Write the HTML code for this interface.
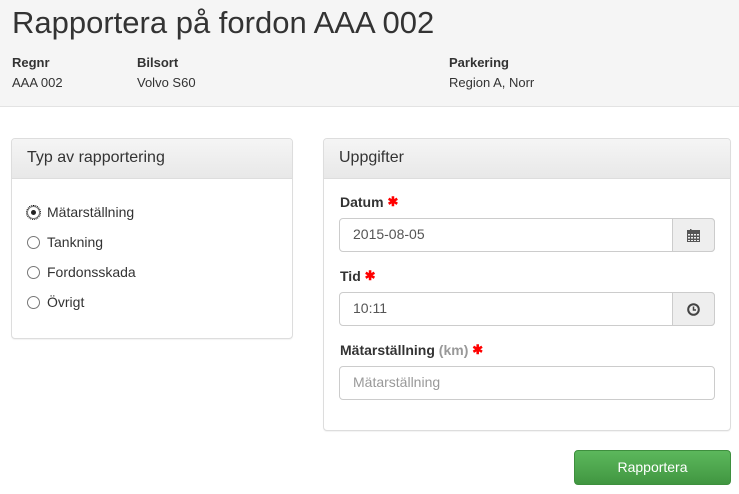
<!DOCTYPE html>
<html><head><meta charset="utf-8"><style>
*{box-sizing:border-box}
body{margin:0;width:739px;height:494px;font-family:"Liberation Sans",Arial,sans-serif;font-size:14px;color:#333;background:#fff;position:relative;overflow:hidden}
.hdr{position:absolute;left:0;top:0;width:739px;height:107px;background:#f5f5f5;border-bottom:1px solid #e3e3e3}
h1{position:absolute;left:12px;top:5px;margin:0;font-size:31px;font-weight:normal;color:#333}
.lbl{position:absolute;font-weight:bold;font-size:13px;top:55px}
.val{position:absolute;font-size:13px;top:75px}
.panel{position:absolute;border:1px solid #ddd;border-radius:4px;box-shadow:0 1px 1px rgba(0,0,0,.05);background:#fff}
.ph{height:40px;border-bottom:1px solid #ddd;background:linear-gradient(#f5f5f5,#e8e8e8);font-size:16px;padding:10px 15px;border-radius:3px 3px 0 0}
.radio{position:absolute;left:15px;font-size:14px}
.radio i{display:inline-block;width:13px;height:13px;border:1px solid #777;border-radius:50%;vertical-align:-2px;margin-right:7px;position:relative;background:#fff}
.radio i.on:after{content:"";position:absolute;left:3px;top:3px;width:5px;height:5px;border-radius:50%;background:#222}
.fl{position:absolute;left:16px;font-weight:bold;font-size:14px}
.fl .s{color:#f00;font-size:13px;vertical-align:1px}
.inp{position:absolute;left:15px;width:376px;height:34px;border:1px solid #ccc;border-radius:4px;padding:7px 13px;font-size:14px;color:#555;background:#fff}
.add{position:absolute;right:-1px;top:-1px;width:43px;height:34px;border:1px solid #ccc;border-radius:0 4px 4px 0;background:#eee;display:flex;align-items:center;justify-content:center}
.btn{position:absolute;left:574px;top:450px;width:157px;height:35px;border:1px solid #3e8f3e;border-radius:4px;background:linear-gradient(#5cb85c,#419641);color:#fff;font-size:14px;text-align:center;line-height:33px}
</style></head><body>
<div class="hdr">
<h1>Rapportera på fordon AAA 002</h1>
<div class="lbl" style="left:12px">Regnr</div><div class="val" style="left:12px">AAA 002</div>
<div class="lbl" style="left:137px">Bilsort</div><div class="val" style="left:137px">Volvo S60</div>
<div class="lbl" style="left:449px">Parkering</div><div class="val" style="left:449px">Region A, Norr</div>
</div>
<div class="panel" style="left:11px;top:138px;width:282px;height:201px">
<div class="ph">Typ av rapportering</div>
<div class="radio" style="top:65px"><i class="on" style="outline:1px dotted #000"></i>Mätarställning</div>
<div class="radio" style="top:95px"><i></i>Tankning</div>
<div class="radio" style="top:125px"><i></i>Fordonsskada</div>
<div class="radio" style="top:155px"><i></i>Övrigt</div>
</div>
<div class="panel" style="left:323px;top:138px;width:408px;height:293px">
<div class="ph">Uppgifter</div>
<div class="fl" style="top:55px">Datum <span class="s">✱</span></div>
<div class="inp" style="top:79px">2015-08-05<div class="add"><svg width="13" height="13" viewBox="0 0 13 13"><rect x="0" y="1" width="13" height="12" fill="#555"/><rect x="3" y="0" width="1.5" height="2" fill="#555"/><g fill="#eee"><rect x="1" y="5" width="2" height="1.5"/><rect x="4" y="5" width="2" height="1.5"/><rect x="7" y="5" width="2" height="1.5"/><rect x="10" y="5" width="2" height="1.5"/><rect x="1" y="8" width="2" height="1.5"/><rect x="4" y="8" width="2" height="1.5"/><rect x="7" y="8" width="2" height="1.5"/><rect x="10" y="8" width="2" height="1.5"/><rect x="1" y="11" width="2" height="1"/><rect x="4" y="11" width="2" height="1"/><rect x="7" y="11" width="2" height="1"/><rect x="10" y="11" width="2" height="1"/></g></svg></div></div>
<div class="fl" style="top:129px">Tid <span class="s">✱</span></div>
<div class="inp" style="top:153px">10:11<div class="add"><svg width="13" height="13" viewBox="0 0 13 13"><circle cx="6.5" cy="6.5" r="5.3" fill="none" stroke="#444" stroke-width="2"/><path d="M6.5 3.5V7H9" fill="none" stroke="#444" stroke-width="1.5"/></svg></div></div>
<div class="fl" style="top:203px">Mätarställning <span style="color:#999">(km)</span> <span class="s">✱</span></div>
<div class="inp" style="top:227px;color:#999">Mätarställning</div>
</div>
<div class="btn">Rapportera</div>
</body></html>
